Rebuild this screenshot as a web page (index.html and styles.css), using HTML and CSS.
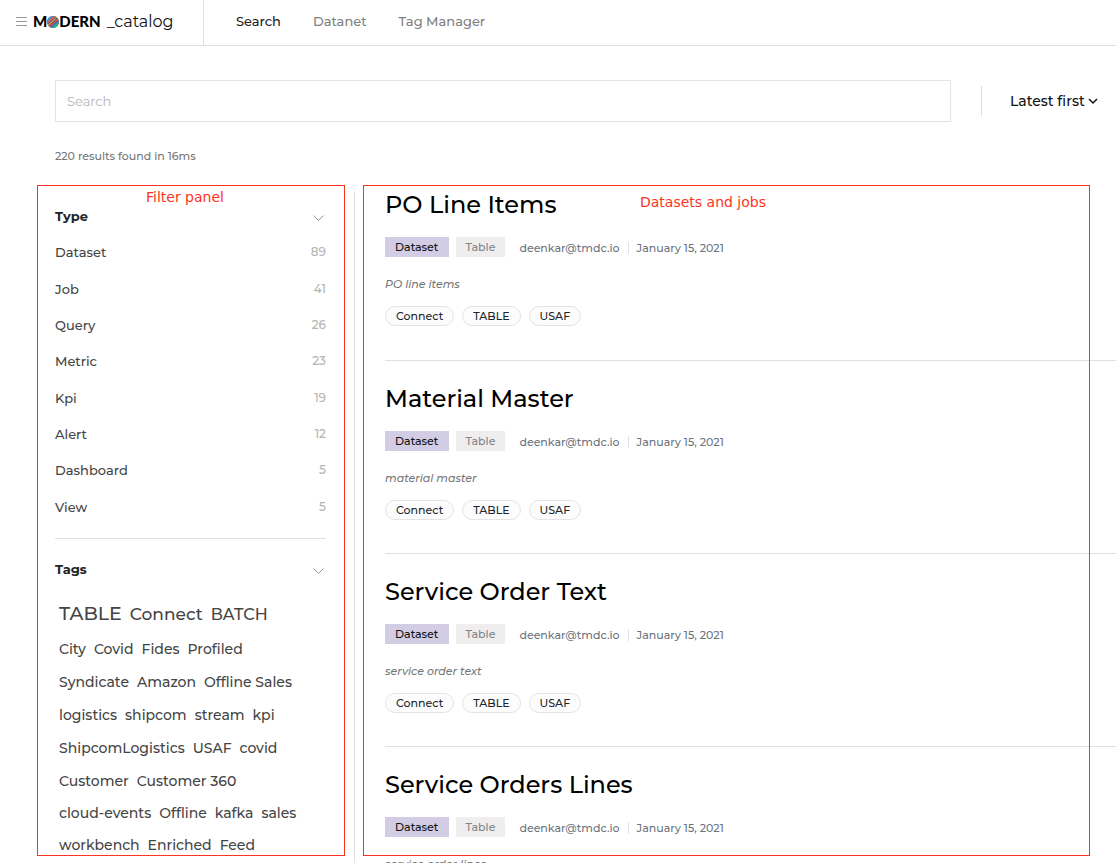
FILE: index.html
```html
<!DOCTYPE html>
<html lang="en">
<head>
<meta charset="utf-8">
<meta name="viewport" content="width=device-width, initial-scale=1">
<title>Modern catalog</title>
<link rel="stylesheet" href="styles.css">
</head>
<body>
<header class="topbar">
  <div class="brand">
    <button class="menu" aria-label="Menu">
      <svg width="11" height="9" viewBox="0 0 11 9" stroke="#999"><path d="M0 .5h11M0 4.5h11M0 8.5h11"/></svg>
    </button>
    <a class="logo" href="#"><span class="logo-word">M<svg class="globe" width="12" height="12" viewBox="0 0 12 12" aria-hidden="true"><defs><clipPath id="disc"><circle cx="6" cy="6" r="6"/></clipPath></defs><g clip-path="url(#disc)"><rect width="12" height="12" fill="#4a5568"/><path d="M-1 5 6-1" stroke="#4f8fd8" stroke-width="3.500"/><path d="M-1 8.300 9-1" stroke="#e8604f" stroke-width="1.500"/><path d="M0 10.200 11 0" stroke="#c9a35a" stroke-width="1.200"/><path d="M1 12 12 2" stroke="#e8503f" stroke-width="1.500"/><path d="M3 12.500 13 3.800" stroke="#3f78d0" stroke-width="1.400"/><path d="M4.500 13.500 14 5.500" stroke="#1fb58a" stroke-width="2.500"/></g></svg>DERN</span><span class="logo-sub">_catalog</span></a>
  </div>
  <nav class="nav">
    <a class="active" href="#">Search</a>
    <a href="#">Datanet</a>
    <a href="#">Tag Manager</a>
  </nav>
</header>

<div class="searchbar">
  <input class="search" type="text" placeholder="Search" aria-label="Search">
  <div class="sort">
    <select aria-label="Sort order"><option>Latest first</option></select>
    <svg width="10" height="7" viewBox="0 0 10 7" fill="none" stroke="#111" stroke-width="1.500"><path d="m1 1 4 4 4-4"/></svg>
  </div>
</div>
<p class="summary">220 results found in 16ms</p>

<main class="content">
  <aside class="filters">
    <section class="types">
      <div class="filter-head"><h2>Type</h2><button aria-label="Collapse type"><svg width="11" height="7" viewBox="0 0 11 7" fill="none" stroke="#999"><path d="m.5.5 5 5 5-5"/></svg></button></div>
      <ul class="type-list">
        <li><a href="#">Dataset</a><span>89</span></li>
        <li><a href="#">Job</a><span>41</span></li>
        <li><a href="#">Query</a><span>26</span></li>
        <li><a href="#">Metric</a><span>23</span></li>
        <li><a href="#">Kpi</a><span>19</span></li>
        <li><a href="#">Alert</a><span>12</span></li>
        <li><a href="#">Dashboard</a><span>5</span></li>
        <li><a href="#">View</a><span>5</span></li>
      </ul>
    </section>
    <section class="tags">
      <div class="filter-head"><h2>Tags</h2><button aria-label="Collapse tags"><svg width="11" height="7" viewBox="0 0 11 7" fill="none" stroke="#999"><path d="m.5.5 5 5 5-5"/></svg></button></div>
      <div class="cloud">
        <div class="cloud-row top"><a class="xl" href="#">TABLE</a><a class="lg" href="#">Connect</a><a class="md" href="#">BATCH</a></div>
        <div class="cloud-row"><a href="#">City</a><a href="#">Covid</a><a href="#">Fides</a><a href="#">Profiled</a></div>
        <div class="cloud-row"><a href="#">Syndicate</a><a href="#">Amazon</a><a href="#">Offline Sales</a></div>
        <div class="cloud-row"><a href="#">logistics</a><a href="#">shipcom</a><a href="#">stream</a><a href="#">kpi</a></div>
        <div class="cloud-row"><a href="#">ShipcomLogistics</a><a href="#">USAF</a><a href="#">covid</a></div>
        <div class="cloud-row small"><a href="#">Customer</a><a href="#">Customer 360</a></div>
        <div class="cloud-row small"><a href="#">cloud-events</a><a href="#">Offline</a><a href="#">kafka</a><a href="#">sales</a></div>
        <div class="cloud-row small"><a href="#">workbench</a><a href="#">Enriched</a><a href="#">Feed</a></div>
      </div>
    </section>
    <div class="callout callout-filters"><span>Filter panel</span></div>
  </aside>

  <section class="results">
    <article class="card">
      <h3>PO Line Items</h3>
      <div class="meta"><span class="kind">Dataset</span><span class="shape">Table</span><span class="owner">deenkar@tmdc.io</span><time>January 15, 2021</time></div>
      <p class="desc">PO line items</p>
      <div class="pills"><a href="#">Connect</a><a href="#">TABLE</a><a href="#">USAF</a></div>
    </article>
    <article class="card">
      <h3>Material Master</h3>
      <div class="meta"><span class="kind">Dataset</span><span class="shape">Table</span><span class="owner">deenkar@tmdc.io</span><time>January 15, 2021</time></div>
      <p class="desc">material master</p>
      <div class="pills"><a href="#">Connect</a><a href="#">TABLE</a><a href="#">USAF</a></div>
    </article>
    <article class="card">
      <h3>Service Order Text</h3>
      <div class="meta"><span class="kind">Dataset</span><span class="shape">Table</span><span class="owner">deenkar@tmdc.io</span><time>January 15, 2021</time></div>
      <p class="desc">service order text</p>
      <div class="pills"><a href="#">Connect</a><a href="#">TABLE</a><a href="#">USAF</a></div>
    </article>
    <article class="card">
      <h3>Service Orders Lines</h3>
      <div class="meta"><span class="kind">Dataset</span><span class="shape">Table</span><span class="owner">deenkar@tmdc.io</span><time>January 15, 2021</time></div>
      <p class="desc">service order lines</p>
    </article>
    <div class="callout callout-results"><span>Datasets and jobs</span></div>
  </section>
</main>
</body>
</html>
```

FILE: styles.css
```css
* { box-sizing: border-box; }
body {
  margin: 0;
  height: 100vh;
  overflow: hidden;
  display: flex;
  flex-direction: column;
  background: #fff;
  color: #444;
  font-family: Montserrat, Inter, sans-serif;
  font-size: 13px;
  font-weight: 500;
}
a { color: inherit; text-decoration: none; }
h2, h3, p, ul { margin: 0; padding: 0; }
ul { list-style: none; }
button { border: 0; padding: 0; background: none; display: flex; }

.topbar { display: flex; flex: none; height: 46px; border-bottom: 1px solid #dedfe3; }
.brand { display: flex; align-items: center; width: 204px; padding-left: 16px; padding-bottom: 2px; gap: 6px; border-right: 1px solid #dedfe3; }
.logo { display: flex; align-items: baseline; gap: 6px; color: #111; font-size: 16px; font-weight: 400; line-height: 20px; }
.logo-word { font-family: Lato, sans-serif; font-size: 15px; font-weight: 900; color: #000; }
.globe { vertical-align: -1px; }
.nav { display: flex; align-items: center; gap: 32px; padding: 0 32px 4px; color: #808080; }
.nav .active { color: #222; }

.searchbar { display: flex; flex: none; align-items: center; gap: 30px; padding: 34px 18px 0 55px; }
.search { flex: 1; min-width: 0; height: 42px; padding: 0 11px; border: 1px solid #e2e3e5; font: inherit; font-weight: 400; color: #444; outline: 0; }
.search::placeholder { color: #b5b5b5; opacity: 1; }
.sort { display: flex; align-items: center; gap: 3px; height: 30px; padding-left: 28px; border-left: 1px solid #dedfe6; }
.sort select { appearance: none; border: 0; padding: 0; background: none; color: #111; font: inherit; font-size: 14px; }
.summary { flex: none; padding: 24px 55px 0; color: #777; font-size: 11px; line-height: 20px; }

.content { display: flex; flex: 1; min-height: 0; padding-top: 25px; }
.filters { position: relative; flex: none; width: 355px; padding: 15px 28px 0 55px; border-right: 1px solid #dfe0e5; }
.filter-head { display: flex; align-items: center; justify-content: space-between; height: 20px; padding-right: 2px; }
.filter-head h2 { color: #212529; font-size: 13px; font-weight: 700; line-height: 20px; }
.filter-head button { padding-top: 4px; }
.types { padding-bottom: 13px; border-bottom: 1px solid #dfe0e4; }
.type-list { display: grid; grid-auto-rows: 1fr; height: 291px; margin-top: 8px; }
.type-list li { display: flex; align-items: center; justify-content: space-between; }
.type-list span { color: #b5b5b5; font-size: 12px; padding-bottom: 1px; }
.tags { padding-top: 20px; }
.cloud { padding: 17px 4px 0; font-size: 14px; }
.cloud-row { display: flex; align-items: baseline; gap: 8px; line-height: 33px; white-space: nowrap; }
.cloud-row.top { line-height: 36px; }
.cloud-row.small { line-height: 32px; }
.xl { font-size: 19px; }
.lg { font-size: 17px; }
.md { font-size: 16px; }

.results { position: relative; flex: 1; min-width: 0; padding-left: 30px; }
.card { height: 193px; padding-top: 24px; border-bottom: 1px solid #e0e0e0; }
.card:first-child { height: 170px; padding-top: 0; }
.card:last-of-type { height: auto; border-bottom: 0; }
.card h3 { color: #000; font-size: 24px; font-weight: 500; line-height: 28px; }
.meta { display: flex; align-items: center; margin-top: 18px; height: 20px; color: #6c757d; font-size: 11px; line-height: 20px; }
.kind { margin-right: 7px; padding: 0 11px 0 10px; background: #d3cce5; color: #111; }
.shape { margin-right: 14px; padding: 0 10px 0 9px; background: #efedee; color: #80858b; }
.owner, time { margin-top: 2px; }
time { margin-left: 8px; padding-left: 8px; border-left: 1px solid #dfe0ee; line-height: 12px; }
.desc { margin-top: 18px; color: #777; font-size: 11px; font-style: italic; line-height: 18px; }
.pills { display: flex; gap: 8px; margin-top: 13px; }
.pills a { padding: 0 10px; border: 1px solid #e4e4e6; border-radius: 10px; background: #fcfcfc; color: #212529; font-size: 11px; line-height: 18px; }

.callout { position: absolute; border: 1px solid #fd3321; color: #fd3321; font: 14px/18px "DejaVu Sans", sans-serif; pointer-events: none; }
.callout-filters { inset: -6px 9px 7px 37px; padding: 2px 0 0 108px; }
.callout-results { inset: -6px 26px 7px 8px; padding: 7px 0 0 276px; }
```
